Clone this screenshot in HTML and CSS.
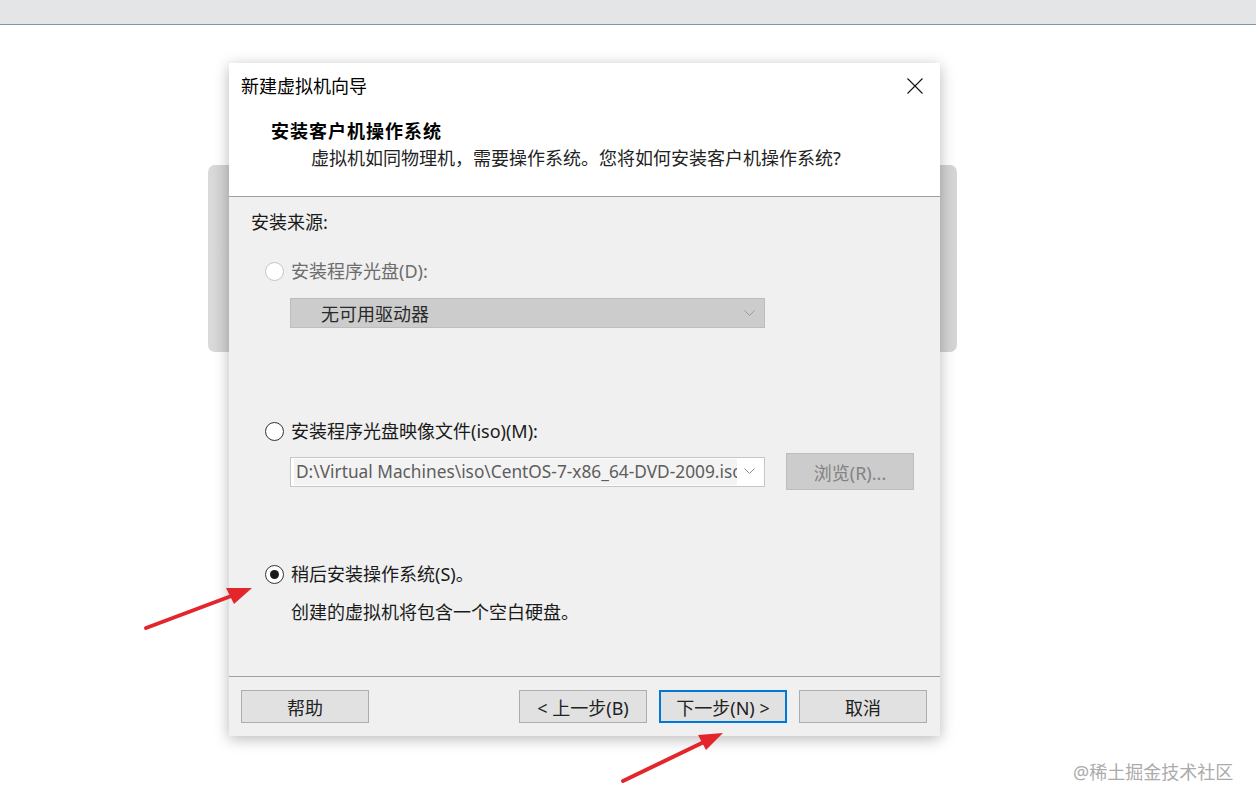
FILE: index.html
```html
<!DOCTYPE html>
<html lang="zh-CN">
<head>
<meta charset="utf-8">
<title>新建虚拟机向导</title>
<link rel="stylesheet" href="styles.css">
</head>
<body>
<div class="page">
  <div class="topbar"></div>
  <div class="stage">
    <div class="backdrop"></div>
    <div class="dialog">
      <div class="titlebar">
        <span class="title">新建虚拟机向导</span>
        <svg class="close" width="16" height="16" viewBox="0 0 16 16"><path d="M0.5 0.5 L15.5 15.5 M15.5 0.5 L0.5 15.5" stroke="#111" stroke-width="1.1" fill="none"/></svg>
      </div>
      <div class="header">
        <div class="h-title">安装客户机操作系统</div>
        <div class="h-sub">虚拟机如同物理机，需要操作系统。您将如何安装客户机操作系统?</div>
      </div>
      <div class="body">
        <div class="section-label">安装来源:</div>
        <div class="option disabled opt1"><span class="radio"></span><span>安装程序光盘(D):</span></div>
        <div class="combo disabled-combo">
          <span class="combo-text">无可用驱动器</span>
          <svg class="chev" width="11" height="7" viewBox="0 0 11 7"><path d="M0.5 0.5 L5.5 5.5 L10.5 0.5" stroke="#9a9a9a" stroke-width="1" fill="none"/></svg>
        </div>
        <div class="option opt2"><span class="radio"></span><span>安装程序光盘映像文件(iso)(M):</span></div>
        <div class="iso-row">
          <div class="combo iso-input">
            <span class="iso-text">D:\Virtual Machines\iso\CentOS-7-x86_64-DVD-2009.iso</span>
            <svg class="chev" width="11" height="7" viewBox="0 0 11 7"><path d="M0.5 0.5 L5.5 5.5 L10.5 0.5" stroke="#8a8a8a" stroke-width="1" fill="none"/></svg>
          </div>
          <div class="browse">浏览(R)...</div>
        </div>
        <div class="option opt3"><span class="radio checked"></span><span>稍后安装操作系统(S)。</span></div>
        <div class="note">创建的虚拟机将包含一个空白硬盘。</div>
      </div>
      <div class="footer">
        <div class="btn help">帮助</div>
        <div class="btn">&lt; 上一步(B)</div>
        <div class="btn primary">下一步(N) &gt;</div>
        <div class="btn">取消</div>
      </div>
    </div>
  </div>
  <div class="watermark">@稀土掘金技术社区</div>
  <svg class="arrows" width="1256" height="804" viewBox="0 0 1256 804">
    <line x1="146" y1="628" x2="234" y2="595" stroke="#e3262b" stroke-width="4" stroke-linecap="round"/>
    <polygon points="252,588 226,588 234,604" fill="#e3262b"/>
    <line x1="623" y1="781" x2="706" y2="741" stroke="#e3262b" stroke-width="4" stroke-linecap="round"/>
    <polygon points="723,733 698,735 706,750" fill="#e3262b"/>
  </svg>
</div>
</body>
</html>
```

FILE: styles.css
```css
* { box-sizing: border-box; }
html, body { margin: 0; padding: 0; }
body {
  background: #ffffff;
  font-family: "Noto Sans", "Noto Sans CJK SC", sans-serif;
  width: 1256px;
  height: 804px;
  overflow: hidden;
}
.page { position: relative; width: 1256px; height: 804px; }
.topbar {
  height: 25px;
  background: #e4e5e7;
  border-bottom: 1px solid #7f98a9;
}
.stage {
  position: relative;
  padding: 38px 0 0 229px;
}
.backdrop {
  position: absolute;
  left: 208px;
  top: 140px;
  width: 749px;
  height: 187px;
  background: linear-gradient(90deg, #dadada 0%, #cfcfcf 4%, #cfcfcf 96%, #d6d6d6 100%);
  border-radius: 7px;
}
.dialog {
  position: relative;
  width: 711px;
  height: 673px;
  background: #f0f0f0;
  box-shadow: 0 3px 14px rgba(0, 0, 0, 0.28);
  display: flex;
  flex-direction: column;
}
.titlebar {
  height: 46px;
  background: #ffffff;
  display: flex;
  align-items: center;
  justify-content: space-between;
  padding: 0 17px 0 12px;
}
.title { font-size: 18px; line-height: 24px; color: #000; }
.close { display: block; }
.header {
  height: 88px;
  background: #ffffff;
  border-bottom: 1px solid #a0a0a0;
  padding: 10px 0 0 42px;
}
.h-title {
  font-size: 18px;
  line-height: 24px;
  font-weight: bold;
  letter-spacing: 1px;
  color: #000;
}
.h-sub {
  margin: 3px 0 0 40px;
  font-size: 18px;
  line-height: 24px;
  color: #222;
}
.body {
  flex: 1;
  padding: 13px 0 0 22px;
  border-bottom: 1px solid #a0a0a0;
}
.section-label { font-size: 18px; line-height: 24px; color: #1a1a1a; }
.option {
  display: flex;
  align-items: center;
  gap: 7px;
  margin-left: 14px;
  font-size: 18px;
  line-height: 24px;
  color: #1a1a1a;
}
.option.disabled { color: #6d6d6d; }
.opt1 { margin-top: 25px; }
.opt2 { margin-top: 91px; }
.opt3 { margin-top: 72px; }
.radio {
  width: 19px;
  height: 19px;
  border-radius: 50%;
  border: 1.5px solid #333;
  background: #fff;
  display: flex;
  align-items: center;
  justify-content: center;
  flex: none;
}
.option.disabled .radio { border-color: #c6c6c6; }
.radio.checked::after {
  content: "";
  width: 9px;
  height: 9px;
  border-radius: 50%;
  background: #1a1a1a;
}
.combo {
  width: 475px;
  height: 30px;
  display: flex;
  align-items: center;
  justify-content: space-between;
}
.disabled-combo {
  margin: 15px 0 0 39px;
  background: #cccccc;
  border: 1px solid #bdbdbd;
  padding: 0 9px 0 30px;
  font-size: 18px;
  color: #2a2a2a;
}
.iso-row {
  display: flex;
  align-items: center;
  gap: 21px;
  margin: 10px 0 0 39px;
  height: 37px;
}
.iso-input {
  background: #fff;
  border: 1px solid #c6c6c6;
  padding: 0 9px 0 3px;
}
.iso-text {
  width: 443px;
  height: 26px;
  line-height: 26px;
  padding-left: 2px;
  overflow: hidden;
  white-space: nowrap;
  font-size: 17.3px;
  color: #5e5e5e;
  background: #f3f3f3;
}
.chev { display: block; flex: none; }
.browse {
  width: 128px;
  height: 37px;
  background: #cccccc;
  border: 1px solid #bdbdbd;
  color: #838383;
  font-size: 18px;
  display: flex;
  align-items: center;
  justify-content: center;
}
.note {
  margin: 14px 0 0 40px;
  font-size: 18px;
  line-height: 24px;
  color: #1a1a1a;
}
.footer {
  height: 59px;
  display: flex;
  gap: 12px;
  padding: 13px 13px 0 12px;
}
.btn {
  width: 128px;
  height: 33px;
  background: #e1e1e1;
  border: 1px solid #adadad;
  color: #222;
  font-size: 18px;
  display: flex;
  align-items: center;
  justify-content: center;
}
.btn.help { margin-right: auto; }
.btn.primary { border: 2px solid #0078d7; }
.watermark {
  position: absolute;
  left: 1073px;
  top: 760px;
  font-size: 18px;
  line-height: 24px;
  color: #ababab;
}
.arrows {
  position: absolute;
  left: 0;
  top: 0;
  pointer-events: none;
}
```
